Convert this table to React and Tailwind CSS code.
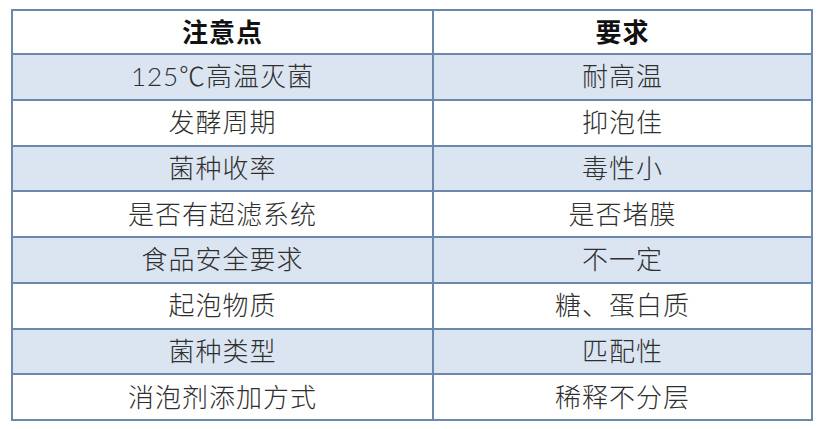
import React from "react";

// 注意点 / 要求 对照表
const rows = [
  ["125℃高温灭菌", "耐高温"],
  ["发酵周期", "抑泡佳"],
  ["菌种收率", "毒性小"],
  ["是否有超滤系统", "是否堵膜"],
  ["食品安全要求", "不一定"],
  ["起泡物质", "糖、蛋白质"],
  ["菌种类型", "匹配性"],
  ["消泡剂添加方式", "稀释不分层"],
];

const App = () => {
  return (
    <div
      className="w-[825px] h-[429px] bg-white pt-[9px] pl-[11px]"
      style={{ fontFamily: '"Lato", "Noto Sans CJK SC", sans-serif' }}
    >
      <table className="w-[802px] border-collapse border-2 border-[#6d88ad] text-[26px] tracking-[1px] text-[#2f2f2f]">
        <thead>
          <tr className="h-[44px] bg-white">
            <th className="w-[421px] border-2 border-[#6d88ad] font-bold text-[#111] text-center">注意点</th>
            <th className="border-2 border-[#6d88ad] font-bold text-[#111] text-center">要求</th>
          </tr>
        </thead>
        <tbody>
          {rows.map(([point, req], i) => (
            <tr key={i} className={`h-[45.75px] ${i % 2 === 0 ? "bg-[#dbe5f1]" : "bg-white"}`}>
              <td className="border-2 border-[#6d88ad] text-center font-light">{point}</td>
              <td className="border-2 border-[#6d88ad] text-center font-light">{req}</td>
            </tr>
          ))}
        </tbody>
      </table>
    </div>
  );
};

export default App;
